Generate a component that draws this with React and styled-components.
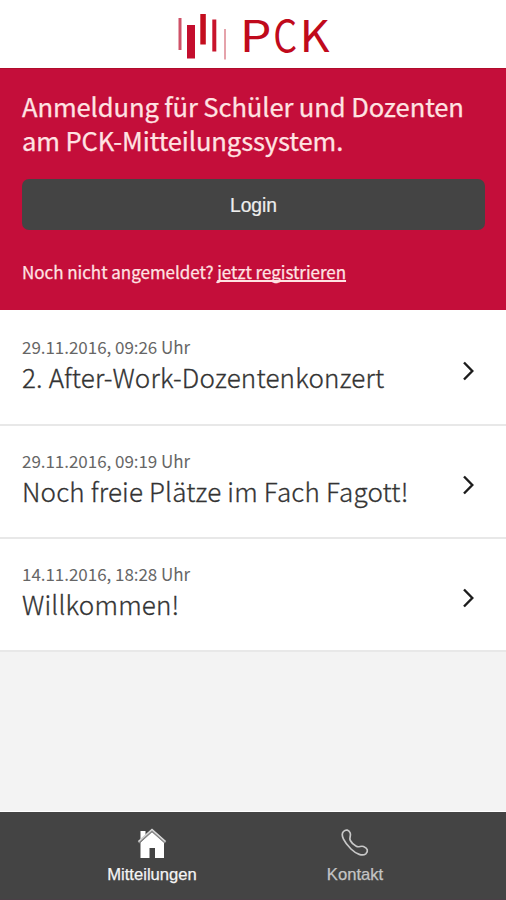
import React from 'react';
import styled, { createGlobalStyle } from 'styled-components';

const GlobalStyle = createGlobalStyle`
  * { box-sizing: border-box; }
  body { margin: 0; background: #f3f3f3; }
`;

const sans = `"Noto Sans CJK SC", "Noto Sans", sans-serif`;
const system = `"Liberation Sans", Arial, sans-serif`;

const Screen = styled.div`
  display: flex;
  flex-direction: column;
  width: 506px;
  height: 900px;
  overflow: hidden;
  background: #f3f3f3;
  font-family: ${sans};
`;

const Header = styled.header`
  display: flex;
  justify-content: center;
  height: 68px;
  flex: none;
  background: #fff;
`;

const Logo = styled.svg`
  display: block;
  width: 156px;
  height: 68px;
`;

const LogoLetter = styled.text`
  font-family: ${sans};
  font-size: 44px;
  fill: #c00a1c;
`;

const LoginPanel = styled.section`
  flex: none;
  height: 242px;
  padding: 20px 21px 0 22px;
  background: #c40e3a;
  border-top: 1px solid #b00d2a;
  color: #ffe3e3;
`;

const Heading = styled.h1`
  margin: 0;
  font-size: 25.6px;
  font-weight: 400;
  line-height: 34px;
  letter-spacing: -0.12px;
  -webkit-text-stroke: 0.25px #ffe3e3;
  white-space: nowrap;
`;

const LoginButton = styled.button`
  display: block;
  width: 100%;
  height: 51px;
  margin: 22px 0 0;
  padding: 3px 0 0;
  border: 0;
  border-radius: 7px;
  background: #444;
  color: #eee;
  font: 19.3px ${system};
  -webkit-text-stroke: 0.2px #eee;
`;

const Register = styled.p`
  margin: 29px 0 0;
  font-size: 17px;
  line-height: 26px;
  letter-spacing: -0.03px;
  -webkit-text-stroke: 0.25px #ffe3e3;
  white-space: nowrap;
`;

const RegisterLink = styled.a`
  color: inherit;
  text-decoration: underline;
  text-decoration-thickness: 2px;
  text-underline-offset: 1px;
  text-decoration-skip-ink: none;
`;

const List = styled.ul`
  flex: 1;
  margin: 0;
  padding: 0;
  list-style: none;
`;

const Row = styled.li`
  display: flex;
  justify-content: space-between;
  height: 113px;
  padding: 23px 31px 0 22px;
  background: #fff;
  border-bottom: 2px solid #e8e8e8;

  &:first-child {
    height: 116px;
    padding-top: 25px;
  }
`;

const DateText = styled.div`
  font-size: 17px;
  line-height: 24px;
  letter-spacing: -0.04px;
  color: #666;
  white-space: nowrap;
`;

const Title = styled.div`
  font-size: 26px;
  font-weight: 300;
  line-height: 36px;
  letter-spacing: 0.18px;
  color: #333;
  -webkit-text-stroke: 0.3px #333;
  white-space: nowrap;
`;

const Chevron = styled.svg`
  width: 13px;
  height: 22px;
  margin-top: 25px;
`;

const TabBar = styled.nav`
  display: flex;
  flex: none;
  justify-content: center;
  height: 89px;
  padding-left: 1px;
  background: #444;
  border-top: 1px solid #fff;
  border-bottom: 1px solid #4a3f46;
`;

const Tab = styled.a`
  display: flex;
  flex-direction: column;
  align-items: center;
  width: 203px;
  padding-top: 15px;
  color: ${(p) => (p.$active ? '#f4f4f4' : '#c4c4c4')};
  font: 16.6px/24px ${system};
  -webkit-text-stroke: 0.25px currentColor;
`;

const TabIcon = styled.svg`
  width: 32px;
  height: 34px;
  margin-bottom: 2px;
`;

const messages = [
  { date: '29.11.2016, 09:26 Uhr', title: '2. After-Work-Dozentenkonzert' },
  { date: '29.11.2016, 09:19 Uhr', title: 'Noch freie Plätze im Fach Fagott!' },
  { date: '14.11.2016, 18:28 Uhr', title: 'Willkommen!' },
];

export default function App() {
  return (
    <>
      <GlobalStyle />
      <Screen>
        <Header>
          <Logo viewBox="175 0 156 68">
            <rect x="178.5" y="18" width="3" height="32" fill="#cf5268" />
            <rect x="187" y="25" width="8" height="33.5" fill="#c40e2e" />
            <rect x="200.3" y="14" width="5.5" height="30.5" fill="#c40e1e" />
            <rect x="212.3" y="19.5" width="4" height="32" fill="#c8142c" />
            <rect x="224" y="29" width="2" height="30.5" fill="#e5a3ab" />
            <LogoLetter transform="translate(239.8 52) scale(1.14 1)">P</LogoLetter>
            <LogoLetter transform="translate(273.2 52) scale(0.85 1)">C</LogoLetter>
            <LogoLetter transform="translate(299.5 52) scale(1.06 1)">K</LogoLetter>
          </Logo>
        </Header>
        <LoginPanel>
          <Heading>
            Anmeldung für Schüler und Dozenten
            <br />
            am PCK-Mitteilungssystem.
          </Heading>
          <LoginButton>Login</LoginButton>
          <Register>
            Noch nicht angemeldet? <RegisterLink>jetzt registrieren</RegisterLink>
          </Register>
        </LoginPanel>
        <List>
          {messages.map((m) => (
            <Row key={m.title}>
              <div>
                <DateText>{m.date}</DateText>
                <Title>{m.title}</Title>
              </div>
              <Chevron viewBox="0 0 13 22" fill="none" stroke="#1c1c1c" strokeWidth="2.4">
                <path d="M2 2.5 10.3 11 2 19.5" />
              </Chevron>
            </Row>
          ))}
        </List>
        <TabBar>
          <Tab $active>
            <TabIcon viewBox="0 0 32 34" fill="#fff">
              <path d="M4.500 4H9.500V10L4.500 14z" />
              <path d="M16 5 28 15.500V31H19V21H13.500V31H4.500V15.500z" />
              <path d="M2.500 15.500 16 3.500 29.500 15.500" fill="none" stroke="#888" strokeWidth="2.4" />
              <path d="M2.500 14.500 16 2.500 29.500 14.500" fill="none" stroke="#d8d8d8" strokeWidth="1.6" />
            </TabIcon>
            Mitteilungen
          </Tab>
          <Tab>
            <TabIcon viewBox="0 0 32 34" fill="none" stroke="#c8c8c8" strokeWidth="1.7" strokeLinejoin="round">
              <path d="M4.500 4.500C7 2 10 3 11.200 6C12.300 9.300 9.800 10.500 11.300 13.500C12.800 16.500 14.800 18 17.300 19.300C20 20.800 21.500 18.500 24.500 19.500C28.800 21.300 29.500 24.200 26.800 26.800C23.500 29.500 17.500 27.300 12 22C5.500 15.500 1 8 4.500 4.500Z" />
            </TabIcon>
            Kontakt
          </Tab>
        </TabBar>
      </Screen>
    </>
  );
}
